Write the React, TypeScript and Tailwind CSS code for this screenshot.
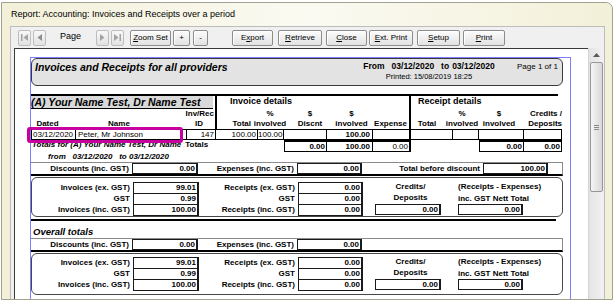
import React from "react";

const ff = "font-['Liberation_Sans',Arial,Helvetica,sans-serif]";

function NavBtn({ children }: { children: React.ReactNode }) {
  return (
    <div className="w-[13px] h-[16px] border border-[#bdbdbd] rounded-[2px] bg-gradient-to-b from-[#f8f8f8] to-[#e2e2e2] flex items-center justify-center">
      {children}
    </div>
  );
}

function Btn({ className, children }: { className: string; children: React.ReactNode }) {
  return (
    <div
      className={`h-[16px] border border-[#8c8c8c] rounded-[2px] bg-gradient-to-b from-[#fcfcfc] to-[#e2e2e2] shadow-[inset_1px_1px_0_#fff] flex items-center justify-center text-[8px] ${className}`}
    >
      {children}
    </div>
  );
}

function Box({ v, className, bold = true }: { v: string; className: string; bold?: boolean }) {
  return (
    <div
      className={`h-[11px] border-t border-b border-l border-r-2 border-[#1a1a1a] text-right pr-[1px] text-[8px] leading-[9px] ${bold ? "font-bold" : ""} ${className}`}
    >
      {v}
    </div>
  );
}

function Lbl({ t, className }: { t: string; className: string }) {
  return <div className={`text-right pr-[3px] text-[8px] font-bold leading-[11px] ${className}`}>{t}</div>;
}

function Stack({ vals, className }: { vals: string[]; className: string }) {
  return (
    <div className={`flex flex-col border-t border-[#1a1a1a] ${className}`}>
      {vals.map((v, i) => (
        <div
          key={i}
          className="h-[11px] border-b border-l border-r-2 border-[#1a1a1a] text-right pr-[1px] text-[8px] leading-[10px] font-bold"
        >
          {v}
        </div>
      ))}
    </div>
  );
}

function DiscountRow({ showTotal }: { showTotal: boolean }) {
  return (
    <div className="w-[532px] h-[14px] border-t border-r border-[#8a8a8a] border-b-2 border-b-black flex items-start">
      <Lbl t="Discounts (inc. GST)" className="w-[101px]" />
      <Box v="0.00" className="w-[66px]" />
      <Lbl t="Expenses (inc. GST)" className="w-[99px]" />
      <Box v="0.00" className="w-[65px]" />
      {showTotal && (
        <>
          <Lbl t="Total before discount" className="w-[121px]" />
          <Box v="100.00" className="w-[65px]" />
        </>
      )}
    </div>
  );
}

function Summary({ className }: { className: string }) {
  return (
    <div className={`w-[532px] rounded-[6px] border border-[#474747] flex ${className}`}>
      <div className="w-[101px] flex flex-col">
        <Lbl t="Invoices (ex. GST)" className="h-[11px]" />
        <Lbl t="GST" className="h-[11px]" />
        <Lbl t="Invoices (inc. GST)" className="h-[11px]" />
      </div>
      <Stack vals={["99.01", "0.99", "100.00"]} className="w-[66px]" />
      <div className="w-[99px] flex flex-col">
        <Lbl t="Receipts (ex. GST)" className="h-[11px]" />
        <Lbl t="GST" className="h-[11px]" />
        <Lbl t="Receipts (inc. GST)" className="h-[11px]" />
      </div>
      <Stack vals={["0.00", "0.00", "0.00"]} className="w-[65px]" />
      <div className="w-[95px] flex flex-col text-[8px] font-bold">
        <div className="h-[11px] leading-[9px] text-center">Credits/</div>
        <div className="h-[11px] leading-[9px] text-center">Deposits</div>
        <Box v="0.00" className="ml-[12px] w-[66px]" />
      </div>
      <div className="flex flex-col text-[8px] font-bold">
        <div className="h-[11px] leading-[10px]">(Receipts - Expenses)</div>
        <div className="h-[11px] leading-[12px]">inc. GST Nett Total</div>
        <Box v="0.00" className="w-[65px]" />
      </div>
    </div>
  );
}

export default function App() {
  return (
    <div className={`w-[615px] h-[305px] bg-white overflow-hidden text-black ${ff}`}>
      <div className="ml-[1px] mt-[2px] w-[612px] h-[298px] border border-[#a3a190] rounded-tr-[7px] bg-[#f3f0d9] flex flex-col">
        <div className="h-[23px] shrink-0 flex items-center pl-[9px] pt-[1px] text-[9px] rounded-tr-[7px] bg-gradient-to-r from-[#f3f0d9] via-[#fbfaf2] to-[#f3f0d9]">
          Report: Accounting: Invoices and Receipts over a period
        </div>
        <div className="ml-[8px] w-[595px] flex-1 min-h-0 border-t border-x border-[#bcbcbc] bg-[#f0f0f0] flex flex-col">
          <div className="h-[21px] shrink-0 flex items-center">
            <div className="ml-[7px] flex gap-[2px]">
              <NavBtn>
                <svg width="7" height="7" viewBox="0 0 7 7">
                  <rect x="0" y="0" width="1.5" height="7" fill="#a3a3a3" />
                  <path d="M7 0 L2.5 3.5 L7 7Z" fill="#a3a3a3" />
                </svg>
              </NavBtn>
              <NavBtn>
                <svg width="5" height="7" viewBox="0 0 5 7">
                  <path d="M5 0 L0.5 3.5 L5 7Z" fill="#8f8f8f" />
                </svg>
              </NavBtn>
            </div>
            <div className="ml-[14px] w-[22px] text-[9px] leading-[10px] -mt-[3px]">Page</div>
            <div className="ml-[14px] flex gap-[2px]">
              <NavBtn>
                <svg width="5" height="7" viewBox="0 0 5 7">
                  <path d="M0 0 L4.5 3.5 L0 7Z" fill="#a3a3a3" />
                </svg>
              </NavBtn>
              <NavBtn>
                <svg width="7" height="7" viewBox="0 0 7 7">
                  <path d="M0 0 L4.5 3.5 L0 7Z" fill="#a3a3a3" />
                  <rect x="5.5" y="0" width="1.5" height="7" fill="#a3a3a3" />
                </svg>
              </NavBtn>
            </div>
            <Btn className="ml-[6px] w-[41px]">
              <span className="underline">Z</span>oom Set
            </Btn>
            <Btn className="ml-[2px] w-[17px]">+</Btn>
            <Btn className="ml-[3px] w-[15px]">-</Btn>
            <Btn className="ml-[24px] w-[41px]">
              E<span className="underline">x</span>port
            </Btn>
            <Btn className="ml-[5px] w-[44px]">
              <span className="underline">R</span>etrieve
            </Btn>
            <Btn className="ml-[4px] w-[41px]">
              <span className="underline">C</span>lose
            </Btn>
            <Btn className="ml-[2px] w-[44px]">
              <span className="underline">E</span>xt. Print
            </Btn>
            <Btn className="ml-[4px] w-[43px]">
              <span className="underline">S</span>etup
            </Btn>
            <Btn className="ml-[3px] w-[42px]">
              <span className="underline">P</span>rint
            </Btn>
          </div>

          <div className="flex-1 min-h-0 flex">
            <div className="ml-[3px] w-[574px] border-l border-t border-[#3a3a3a] bg-white overflow-hidden">
              <div className="ml-[15px] mt-[8px] w-[541px] h-[260px] border-x border-t border-[#7d7dff]">
                {/* page header */}
                <div className="w-[532px] h-[28px] rounded-[6px] border border-[#3a3a3a] bg-[#e3e3e3] flex pl-[3px] pt-[2px]">
                  <div className="w-[322px] text-[10.5px] leading-[12px] font-bold italic">
                    Invoices and Receipts for all providers
                  </div>
                  <div className="w-[144px] flex flex-col items-center">
                    <div className="text-[8.5px] leading-[11px] font-bold">
                      <span className="mr-[7px]">From</span>
                      <span className="mr-[7px]">03/12/2020</span>
                      <span className="mr-[3px]">to</span>
                      <span>03/12/2020</span>
                    </div>
                    <div className="text-[7.5px] leading-[10px]">Printed: 15/08/2019 18:25</div>
                  </div>
                  <div className="ml-[16px] text-[8px] leading-[12px]">Page 1 of 1</div>
                </div>

                <div className="mt-[8px] w-[527px] h-[2px] bg-black" />

                {/* column headers */}
                <div className="flex h-[33px] text-[8px] font-bold leading-[10px]">
                  <div className="w-[186px] border-r-2 border-black">
                    <div className="w-[182px] h-[13px] bg-[#d9d9d9] border-b border-black text-[10.5px] leading-[13px] italic whitespace-nowrap">
                      (A) Your Name Test, Dr Name Test
                    </div>
                    <div className="h-[10px] flex justify-end pr-[1px]">Inv/Rec</div>
                    <div className="h-[10px] flex">
                      <div className="w-[33px] text-center">Dated</div>
                      <div className="w-[110px] text-center">Name</div>
                      <div className="w-[10px]" />
                      <div className="w-[30px] text-center">ID</div>
                    </div>
                  </div>
                  <div className="w-[194px] border-r-2 border-black">
                    <div className="h-[13px] pl-[13px] text-[9px] leading-[11px]">Invoice details</div>
                    <div className="h-[10px] flex">
                      <div className="w-[34px]" />
                      <div className="w-[38px] text-center">%</div>
                      <div className="w-[42px] text-center">$</div>
                      <div className="w-[41px] text-center">$</div>
                    </div>
                    <div className="h-[10px] flex">
                      <div className="w-[34px] text-right">Total</div>
                      <div className="w-[38px] text-center">involved</div>
                      <div className="w-[42px] text-center">Discnt</div>
                      <div className="w-[41px] text-center">involved</div>
                      <div className="w-[37px] text-center">Expense</div>
                    </div>
                  </div>
                  <div className="w-[151px]">
                    <div className="h-[13px] pl-[7px] text-[9px] leading-[11px]">Receipt details</div>
                    <div className="h-[10px] flex">
                      <div className="w-[32px]" />
                      <div className="w-[38px] text-center">%</div>
                      <div className="w-[36px] text-center">$</div>
                      <div className="w-[45px] text-right">Credits /</div>
                    </div>
                    <div className="h-[10px] flex">
                      <div className="w-[32px] text-center">Total</div>
                      <div className="w-[38px] text-center">involved</div>
                      <div className="w-[36px] text-center">involved</div>
                      <div className="w-[45px] text-right">Deposits</div>
                    </div>
                  </div>
                </div>

                {/* data row */}
                <div className="relative flex h-[11px] text-[8px] leading-[9px]">
                  <div className="w-[45px] border border-black pl-[1px]">03/12/2020</div>
                  <div className="w-[107px] border-y border-r border-black pl-[2px]">Peter, Mr Johnson</div>
                  <div className="w-[3px] border-y border-black" />
                  <div className="w-[30px] border border-black text-right pr-[1px]">147</div>
                  <div className="w-[42px] border-y border-r border-black text-right pr-[1px]">100.00</div>
                  <div className="w-[26px] border-y border-r border-black text-right pr-[1px]">100.00</div>
                  <div className="w-[43px] border-y border-r border-black" />
                  <div className="w-[46px] border-y border-r border-black text-right pr-[2px] font-bold">100.00</div>
                  <div className="w-[38px] border-y border-r-2 border-black" />
                  <div className="w-[42px] border-y border-r border-black" />
                  <div className="w-[26px] border-y border-r border-black" />
                  <div className="w-[45px] border-y border-r border-black" />
                  <div className="w-[38px] border-y border-r border-black" />
                  <div className="absolute -left-[4px] -top-[2px] w-[156px] h-[16px] border-[3px] border-[#c8009f] rounded-[3px]" />
                </div>

                {/* totals row */}
                <div className="flex h-[12px] text-[8px] leading-[10px] font-bold">
                  <div className="w-[152px] pl-[1px] italic whitespace-nowrap overflow-hidden">
                    Totals for (A) Your Name Test, Dr Name
                  </div>
                  <div className="w-[33px] whitespace-nowrap">
                    <span className="text-[#f0c27a] font-normal">:</span>Totals
                  </div>
                  <div className="w-[68px]" />
                  <div className="w-[43px] h-[12px] border-t-2 border-x border-b border-black text-right pr-[1px]">0.00</div>
                  <div className="w-[46px] h-[12px] border-t-2 border-r border-b border-black text-right pr-[2px]">100.00</div>
                  <div className="w-[38px] h-[12px] border-t-2 border-r-2 border-b border-black text-right pr-[1px] font-normal">0.00</div>
                  <div className="w-[68px]" />
                  <div className="w-[45px] h-[12px] border-t-2 border-x border-b border-black text-right pr-[1px]">0.00</div>
                  <div className="w-[38px] h-[12px] border-t-2 border-r border-b border-black text-right pr-[1px]">0.00</div>
                </div>

                <div className="h-[10px] pl-[17px] text-[8px] leading-[10px] font-bold italic whitespace-pre">
                  from   03/12/2020   to 03/12/2020
                </div>

                <DiscountRow showTotal />
                <Summary className="mt-[1px] h-[40px] pt-[4px]" />
                <div className="mt-[2px] w-[525px] h-[2px] bg-black" />

                <div className="h-[17px] pl-[2px] pt-[5px] text-[9.5px] leading-[12px] font-bold italic">Overall totals</div>
                <DiscountRow showTotal={false} />
                <Summary className="mt-[1px] h-[42px] pt-[3px]" />
              </div>
            </div>

            {/* scrollbar */}
            <div className="w-[15px] bg-gradient-to-r from-[#e4e4e4] to-[#f1f1f1] border-l border-[#d5d5d5] flex flex-col items-center">
              <div className="h-[13px] w-full flex items-center justify-center">
                <svg width="7" height="4" viewBox="0 0 7 4">
                  <path d="M0 4 L3.5 0 L7 4Z" fill="#5a5a5a" />
                </svg>
              </div>
              <div className="mt-[1px] w-[13px] h-[130px] rounded-[2px] border border-[#979797] bg-gradient-to-r from-[#f5f5f5] to-[#d8d8d8] flex flex-col items-center justify-center gap-[1px]">
                <div className="w-[5px] h-px bg-[#8a8a8a]" />
                <div className="w-[5px] h-px bg-[#8a8a8a]" />
                <div className="w-[5px] h-px bg-[#8a8a8a]" />
              </div>
            </div>
          </div>
        </div>
      </div>
    </div>
  );
}
